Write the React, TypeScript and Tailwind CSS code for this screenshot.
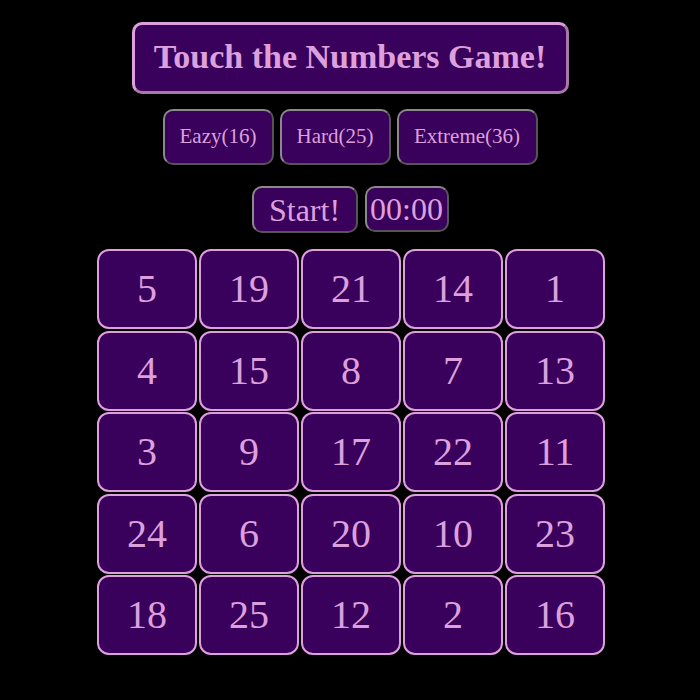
const board = [
  [5, 19, 21, 14, 1],
  [4, 15, 8, 7, 13],
  [3, 9, 17, 22, 11],
  [24, 6, 20, 10, 23],
  [18, 25, 12, 2, 16],
];

const levels = [
  { label: 'Eazy(16)', w: 'w-[111px]' },
  { label: 'Hard(25)', w: 'w-[111px]' },
  { label: 'Extreme(36)', w: 'w-[141px]' },
];

export default function App() {
  return (
    <div className="min-h-[700px] w-full bg-black text-[#dda0dd] font-['Liberation_Serif',serif] flex flex-col items-center pt-[22px]">
      <h1 className="w-[437px] h-[72px] flex items-center justify-center pb-[4px] bg-[#3a015c] rounded-[10px] border-[3px] border-t-[#dda0dd] border-l-[#dda0dd] border-b-[#a878a8] border-r-[#a878a8] text-[34px] font-bold">
        Touch the Numbers Game!
      </h1>

      <div className="flex gap-[6px] mt-[15px]">
        {levels.map((l) => (
          <button
            key={l.label}
            className={`${l.w} h-[56px] bg-[#3a015c] rounded-[10px] border-2 border-t-[#8a8a8a] border-l-[#8a8a8a] border-b-[#555] border-r-[#555] text-[21px]`}
          >
            {l.label}
          </button>
        ))}
      </div>

      <div className="flex gap-[7px] mt-[21px]">
        <button className="w-[106px] h-[47px] bg-[#3a015c] rounded-[10px] border-2 border-t-[#8a8a8a] border-l-[#8a8a8a] border-b-[#555] border-r-[#555] text-[32px] leading-none">
          Start!
        </button>
        <div className="w-[84px] h-[46px] flex items-center justify-center bg-[#3a015c] rounded-[10px] border-2 border-t-[#8a8a8a] border-l-[#8a8a8a] border-b-[#555] border-r-[#555] text-[32px] leading-none">
          00:00
        </div>
      </div>

      <div className="grid grid-cols-5 gap-x-[2px] gap-y-[1.5px] mt-[16px] ml-[2px]">
        {board.flat().map((n) => (
          <button
            key={n}
            className="w-[100px] h-[80px] bg-[#3a015c] rounded-[12px] border-2 border-[#dda0dd] text-[40px] leading-none"
          >
            {n}
          </button>
        ))}
      </div>
    </div>
  );
}
